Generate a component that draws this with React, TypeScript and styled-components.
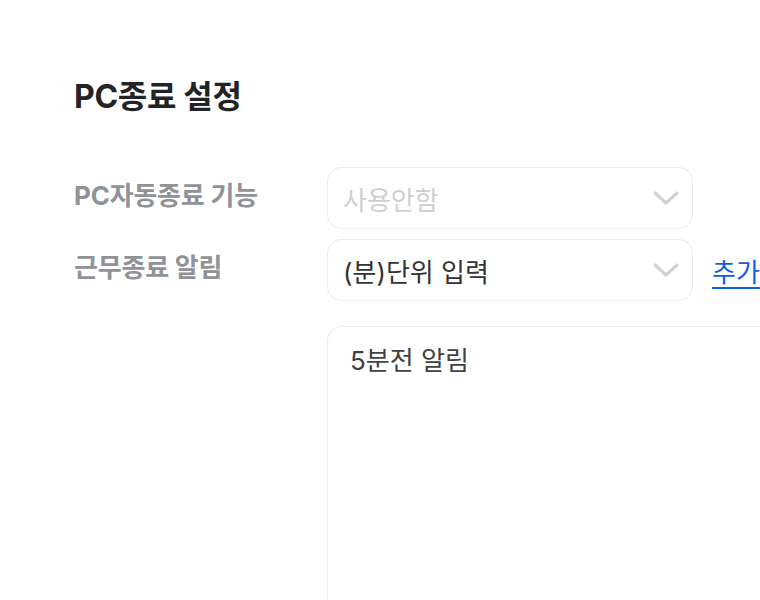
import * as React from 'react';
import styled, { createGlobalStyle } from 'styled-components';

const GlobalStyle = createGlobalStyle`
  html, body {
    margin: 0;
    padding: 0;
    background: #ffffff;
    overflow: hidden;
  }
  body {
    font-family: Inter, "Noto Sans CJK KR", "Noto Sans", sans-serif;
  }
`;

const Page = styled.div`
  width: 760px;
  height: 600px;
  padding: 76px 0 0 74px;
  box-sizing: border-box;
  overflow: hidden;
`;

const Title = styled.h2`
  margin: 0 0 49px;
  font-size: 32px;
  line-height: 42px;
  font-weight: 700;
  color: #222326;
  letter-spacing: -0.3px;
`;

const Form = styled.div`
  display: grid;
  grid-template-columns: 253px 366px auto;
  row-gap: 10px;
  align-items: center;
`;

const Label = styled.div`
  font-size: 26px;
  line-height: 34px;
  font-weight: 700;
  color: #909296;
  letter-spacing: -0.2px;
  margin-top: -4px;
`;

const SelectBox = styled.div<{ $placeholder?: boolean }>`
  height: 62px;
  box-sizing: border-box;
  border: 1.5px solid #ececec;
  border-radius: 14px;
  display: flex;
  align-items: center;
  justify-content: space-between;
  padding: 0 12px 0 15px;
  font-size: 26px;
  color: ${p => (p.$placeholder ? '#cfcfcf' : '#333333')};
`;

const Chevron = styled.svg`
  width: 28px;
  height: 16px;
  flex: none;
`;

const AddLink = styled.a`
  margin-left: 19px;
  font-size: 26px;
  color: #0b5fe0;
  text-decoration: underline;
  text-underline-offset: 5px;
  text-decoration-thickness: 2px;
  cursor: pointer;
  white-space: nowrap;
`;

const TextArea = styled.div`
  grid-column: 2 / 4;
  margin-top: 15px;
  width: 460px;
  height: 320px;
  box-sizing: border-box;
  border: 1.5px solid #ececec;
  border-radius: 14px;
  padding: 16px 22px;
  font-size: 26px;
  line-height: 36px;
  color: #404244;
`;

const ChevronIcon = () => (
  <Chevron viewBox="0 0 28 16" fill="none">
    <path d="M3 3l11 10L25 3" stroke="#d2d2d2" strokeWidth="3.2" strokeLinecap="round" strokeLinejoin="round" />
  </Chevron>
);

const App: React.FC = () => {
  return (
    <Page>
      <GlobalStyle />
      <Title>PC종료 설정</Title>
      <Form>
        <Label>PC자동종료 기능</Label>
        <SelectBox $placeholder>
          사용안함
          <ChevronIcon />
        </SelectBox>
        <div />
        <Label>근무종료 알림</Label>
        <SelectBox>
          (분)단위 입력
          <ChevronIcon />
        </SelectBox>
        <AddLink>추가</AddLink>
        <div />
        <TextArea>5분전 알림</TextArea>
      </Form>
    </Page>
  );
};

export default App;
